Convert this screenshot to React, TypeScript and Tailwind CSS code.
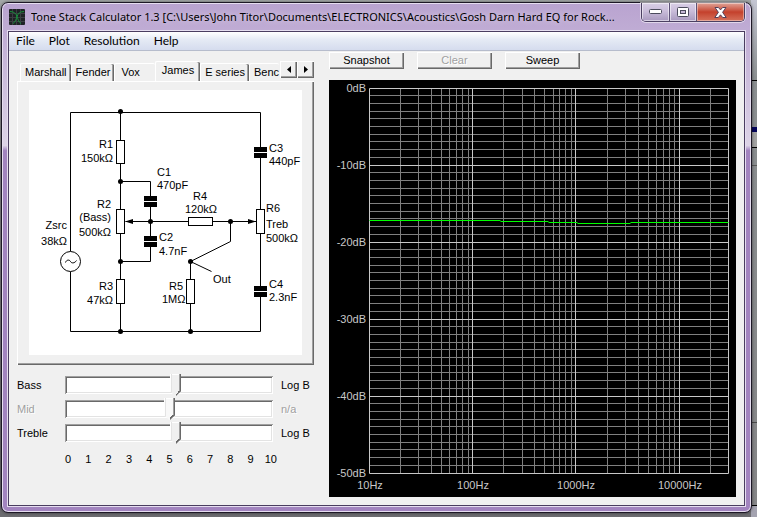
import React from 'react'

const RAISED = 'bg-[#f0f0f0] shadow-[inset_1px_1px_#fff,inset_-1px_-1px_#696969,inset_-2px_-2px_#a0a0a0]'

const TABS = ['Marshall', 'Fender', 'Vox', 'James', 'E series', 'Benc']

function AppIcon() {
    return (
        <svg width="16" height="16" viewBox="0 0 16 16" className="shrink-0" aria-hidden="true">
            <rect width="16" height="16" rx="1" fill="#1e2225" />
            <path d="M0 4.5h16M0 8.5h16M0 12.5h16M3.5 0v16M7.5 0v16M11.5 0v16" stroke="#3a3e42" />
            <path d="M1 2.5c4 0 6 2 7 5s2 6 4 7M15 2.5c-4 0-6 2-7 5s-2 6-4 7" fill="none" stroke="#17913a" />
        </svg>
    )
}

function CaptionButtons() {
    const glass = 'flex items-center justify-center border-r border-[#5d5277] bg-linear-to-b from-[#d9cfe6] via-[#c9bcd9] via-45% to-[#a99abf] shadow-[inset_0_0_0_1px_#ffffff88]'
    return (
        <div className="flex h-[19px] shrink-0 overflow-hidden rounded-b-[5px] border border-t-0 border-[#4b4062] shadow-[0_0_0_1px_#ffffff88]">
            <button aria-label="Minimize" className={`${glass} w-[28px]`}>
                <svg width="13" height="6" viewBox="0 0 13 6"><rect x=".5" y=".5" width="12" height="4" rx="1" fill="#fff" stroke="#4b4b5c" /></svg>
            </button>
            <button aria-label="Maximize" className={`${glass} w-[27px]`}>
                <svg width="12" height="10" viewBox="0 0 12 10">
                    <rect x=".5" y=".5" width="11" height="9" rx="1" fill="#fff" stroke="#4b4b5c" />
                    <rect x="3.5" y="3.5" width="5" height="3" fill="#c5b9d6" stroke="#4b4b5c" />
                </svg>
            </button>
            <button aria-label="Close" className="flex w-[47px] items-center justify-center bg-linear-to-b from-[#dfa398] via-[#c4402c] via-50% to-[#d5705a] shadow-[inset_0_0_0_1px_#ffffff66]">
                <svg width="13" height="11" viewBox="0 0 13 11">
                    <path d="M1 .5h3.4l2.1 2.4L8.6.5H12L8.6 5.3l3.6 5.2H8.7L6.5 7.8l-2.2 2.7H.8l3.6-5.2z" fill="#fff" stroke="#54405a" />
                </svg>
            </button>
        </div>
    )
}

function MenuBar() {
    return (
        <nav className="flex h-[19px] items-center gap-[14px] border-b border-[#b6bccc] bg-linear-to-b from-white via-[#e6ebf5] via-40% to-[#d5dcee] px-[7px] font-[Lato,'Open_Sans',sans-serif] text-[12px] leading-[18px]">
            {['File', 'Plot', 'Resolution', 'Help'].map((m) => <button key={m}>{m}</button>)}
        </nav>
    )
}

function TabStrip({ active }: { active: string }) {
    return (
        <div className="flex h-[20px] items-end pl-[3px]">
            <div role="tablist" className="flex min-w-0 flex-1 items-end overflow-hidden">
                {TABS.map((t) => (
                    <button
                        key={t}
                        role="tab"
                        aria-selected={t === active}
                        className={`shrink-0 rounded-t-[2px] border-t border-l border-white bg-[#f0f0f0] ${t === active ? 'h-[20px] px-[6px] pb-[2px] shadow-[inset_-1px_0_#696969,inset_-2px_0_#a0a0a0]' : t === 'Vox' ? 'h-[18px] pr-[15px] pl-[6px]' : t === 'Benc' ? 'h-[18px] pl-[4px]' : 'h-[18px] px-[4px] shadow-[inset_-1px_0_#696969,inset_-2px_0_#a0a0a0]'}`}
                    >
                        {t}
                    </button>
                ))}
            </div>
            <div className="flex h-[20px] items-start">
                <button aria-label="Scroll left" className={`${RAISED} flex h-[17px] w-[17px] items-center justify-center`}>
                    <svg width="4" height="7" viewBox="0 0 4 7"><path d="M4 0v7L0 3.5z" /></svg>
                </button>
                <button aria-label="Scroll right" className={`${RAISED} flex h-[17px] w-[17px] items-center justify-center`}>
                    <svg width="4" height="7" viewBox="0 0 4 7"><path d="M0 0v7l4-3.5z" /></svg>
                </button>
            </div>
        </div>
    )
}

const NODES = [[91, 21], [91, 91], [121, 131], [91, 171], [91, 241], [161, 171], [161, 241], [201, 131]]
const CAPS = [[115, 106], [115, 146], [225, 57], [225, 196]]
const RESISTORS = [[87, 50, 8, 23], [87, 119, 8, 24], [87, 189, 8, 24], [157, 189, 8, 24], [159, 127, 24, 8], [227, 119, 8, 24]]

// x, baseline, text, right aligned
const PARTS: [number, number, string, boolean?][] = [
    [84, 58, 'R1', true], [84, 72, '150kΩ', true],
    [82, 118, 'R2', true], [82, 131, '(Bass)', true], [82, 146, '500kΩ', true],
    [38, 139, 'Zsrc', true], [38, 155, '38kΩ', true],
    [84, 200, 'R3', true], [84, 214, '47kΩ', true],
    [128, 86, 'C1'], [128, 99, '470pF'],
    [130, 151, 'C2'], [130, 165, '4.7nF'],
    [164, 110, 'R4'], [156, 123, '120kΩ'],
    [140, 200, 'R5'], [133, 213, '1MΩ'],
    [184, 193, 'Out'],
    [240, 62, 'C3'], [240, 75, '440pF'],
    [237, 122, 'R6'], [237, 138, 'Treb'], [237, 152, '500kΩ'],
    [240, 198, 'C4'], [240, 211, '2.3nF'],
]

function Schematic() {
    return (
        <svg viewBox="0 0 273 265" className="block w-full bg-white" role="img" aria-label="James tone stack">
            <g transform="translate(.5 .5)" fill="none" stroke="#000">
                <path d="M41 161V22H231V241H41V181M91 22V241M91 91H121V171H91M96 131H227M161 171V241M201 131V151L161 171L182 181" />
                {RESISTORS.map(([x, y, w, h]) => <rect key={`${x}-${y}`} x={x} y={y} width={w} height={h} fill="#fff" />)}
                <circle cx="41" cy="171" r="10" fill="#fff" />
                <path d="M36 172c1-3 4-3 5-1s4 2 6-1" />
            </g>
            {CAPS.map(([x, y]) => (
                <g key={`${x}-${y}`}>
                    <rect x={x} y={y} width="13" height="11" />
                    <rect x={x} y={y + 5} width="13" height="1" fill="#fff" />
                </g>
            ))}
            {NODES.map(([x, y]) => <circle key={`${x}-${y}`} cx={x + 0.5} cy={y + 0.5} r="2.5" />)}
            <path d="M96 131.5l8-2.5v5zM227 131.5l-8-2.5v5z" />
            <g fontSize="11">
                {PARTS.map(([x, y, text, end]) => <text key={`${x}-${y}`} x={x} y={y} textAnchor={end ? 'end' : 'start'}>{text}</text>)}
            </g>
        </svg>
    )
}

function PotSlider({ label, taper, value, disabled }: { label: string; taper: string; value: number; disabled?: boolean }) {
    const muted = disabled ? 'text-[#a0a0a0] [text-shadow:1px_1px_#fff]' : ''
    const id = `pot-${label}`
    return (
        <div className="flex h-[18px] items-center">
            <label htmlFor={id} className={`w-[48px] ${muted}`}>{label}</label>
            <input
                id={id}
                type="range"
                min={0}
                max={1000}
                defaultValue={value}
                disabled={disabled}
                className={`h-[18px] min-w-0 flex-1 appearance-none bg-white shadow-[inset_1px_1px_#a0a0a0,inset_-1px_-1px_#fff,inset_2px_2px_#696969,inset_-2px_-2px_#e3e3e3] [&::-webkit-slider-runnable-track]:h-[18px] [&::-webkit-slider-thumb]:-mt-[2px] [&::-webkit-slider-thumb]:h-[22px] [&::-webkit-slider-thumb]:w-[11px] [&::-webkit-slider-thumb]:appearance-none [&::-webkit-slider-thumb]:[clip-path:polygon(0_0,100%_0,100%_17px,6px_100%,5px_100%,0_17px)] [&::-webkit-slider-thumb]:[background:linear-gradient(to_bottom_right,transparent_30%,#696969_30%)_right_bottom/5px_5px_no-repeat,linear-gradient(to_right,#fff_1px,#e3e3e3_1px_2px,transparent_2px_9px,#a0a0a0_9px_10px,#696969_10px),linear-gradient(#fff_1px,transparent_1px),var(--face)] ${disabled ? '[--face:#f8f8f8]' : '[--face:#f0f0f0]'}`}
            />
            <span className={`w-[41px] pl-[8px] ${muted}`}>{taper}</span>
        </div>
    )
}

const PLOT = { left: 40, right: 399, top: 8, bottom: 393 }
const freqX = (f: number) => Math.round(PLOT.left + ((PLOT.right - PLOT.left) * Math.log10(f / 10)) / Math.log10(3000))
const dbY = (db: number) => Math.floor(PLOT.top + (-db * (PLOT.bottom - PLOT.top)) / 50)

const minorFreqs = [10, 100, 1000, 10000].flatMap((d) => [2, 3, 4, 5, 6, 7, 8, 9].map((n) => n * d)).filter((f) => f < 30000)
const minorDbs = Array.from({ length: 50 }, (_, i) => -i).filter((d) => d % 10 !== 0)

function ResponsePlot() {
    const vline = (x: number) => `M${x} ${PLOT.top}V${PLOT.bottom}`
    const hline = (y: number) => `M${PLOT.left} ${y}H${PLOT.right}`
    return (
        <svg viewBox="0 0 407 417" className="block w-full bg-black" role="img" aria-label="Frequency response">
            <g transform="translate(.5 .5)" fill="none">
                <path stroke="#808080" d={minorFreqs.map((f) => vline(freqX(f))).join('') + minorDbs.map((d) => hline(dbY(d))).join('')} />
                <path stroke="#c8c8c8" d={[10, 100, 1000, 10000, 30000].map((f) => vline(freqX(f))).join('') + [0, -10, -20, -30, -40, -50].map((d) => hline(dbY(d))).join('')} />
                <path stroke="#00ff00" d="M40 140H171M171 141H219M219 142H248M248 143H301M301 142H399" />
            </g>
            <g fontSize="11" fill="#c8c8c8">
                {[0, -10, -20, -30, -40, -50].map((d) => <text key={d} x="37" y={dbY(d) + 4} textAnchor="end">{d}dB</text>)}
                {[10, 100, 1000, 10000].map((f) => <text key={f} x={freqX(f) + 1} y="409" textAnchor="middle">{f}Hz</text>)}
            </g>
        </svg>
    )
}

// sliver of the windows lying behind this one
function DesktopEdge() {
    return (
        <div className="absolute inset-y-0 right-0 flex w-[6px] flex-col bg-linear-to-b from-[#c4c6d2] via-[#8b8f91] via-15% to-[#858587]">
            <div className="h-[81px] border-b border-black" />
            <div className="h-[46px]" />
            <div className="h-[5px] bg-[#05055a]" />
            <div className="h-[16px] border-b border-black bg-[#a2a2a2]" />
            <div className="h-[18px] border-b border-[#5a5a5a]" />
            <div className="h-[257px] border-b border-[#4a4a4a]" />
            <div className="h-[83px] border-b border-black" />
            <div className="flex-1 bg-[#a4a3b0]" />
        </div>
    )
}

export default function App() {
    return (
        <div className="relative min-h-screen overflow-hidden bg-linear-to-b from-[#a4a8a8] via-[#8e8e90] via-30% to-[#6c6c70] pt-[2px] pr-[5px] pb-[4px] pl-[1px] font-['Liberation_Sans',Arial,sans-serif] text-[11px] leading-[13px] text-black">
            <DesktopEdge />
            <div className="relative rounded-[7px] border border-[#1d1826] bg-linear-to-b from-[#b9a3d0] via-[#dcd3e6] via-28% to-[#a284bf] to-29% px-[6px] pb-[6px] shadow-[inset_0_0_0_1px_#e6def0,0_0_3px_#0008]">
                <header className="flex h-[28px] items-start">
                    <div className="flex h-[28px] min-w-0 flex-1 items-center gap-[6px] pl-[1px]">
                        <AppIcon />
                        <h1 className="truncate font-['Noto_Sans','Open_Sans',sans-serif] text-[11px] leading-[18px] [text-shadow:0_0_6px_#ffffffaa]">
                            Tone Stack Calculator 1.3 [C:\Users\John Titor\Documents\ELECTRONICS\Acoustics\Gosh Darn Hard EQ for Rock...
                        </h1>
                    </div>
                    <CaptionButtons />
                </header>
                <div className="border border-[#4a3d60] bg-[#f0f0f0] shadow-[0_0_0_1px_#e6def0]">
                    <MenuBar />
                    <main className="flex gap-[15px] px-[8px] pb-[8px]">
                        <section className="w-[297px] shrink-0 pt-[10px]">
                            <TabStrip active="James" />
                            <div className={`${RAISED} px-[12px] pt-[9px] pb-[10px]`}>
                                <Schematic />
                            </div>
                            <div className="flex flex-col gap-[6px] pt-[11px]">
                                <PotSlider label="Bass" taper="Log B" value={533} />
                                <PotSlider label="Mid" taper="n/a" value={503} disabled />
                                <PotSlider label="Treble" taper="Log B" value={533} />
                            </div>
                            <div className="mt-[11px] mr-[33px] ml-[41px] grid grid-cols-11 text-center">
                                {Array.from({ length: 11 }, (_, i) => <span key={i}>{i}</span>)}
                            </div>
                        </section>
                        <section className="min-w-0 flex-1 pt-[1px]">
                            <div className="mb-[11px] flex gap-[13px]">
                                <button className={`${RAISED} h-[17px] w-[75px]`}>Snapshot</button>
                                <button disabled className={`${RAISED} h-[17px] w-[75px] text-[#a0a0a0] [text-shadow:1px_1px_#fff]`}>Clear</button>
                                <button className={`${RAISED} h-[17px] w-[75px]`}>Sweep</button>
                            </div>
                            <ResponsePlot />
                        </section>
                    </main>
                </div>
            </div>
        </div>
    )
}
